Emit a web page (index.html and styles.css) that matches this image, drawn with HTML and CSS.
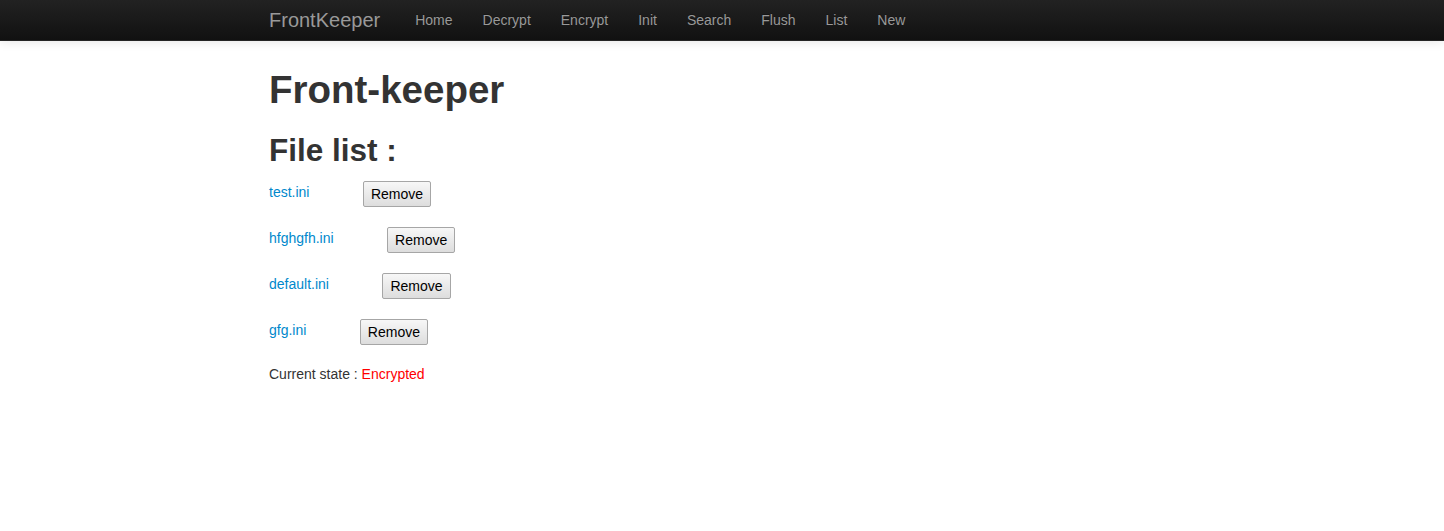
FILE: index.html
```html
<!DOCTYPE html>
<html>
<head>
<meta charset="utf-8">
<title>FrontKeeper</title>
<link rel="stylesheet" href="styles.css">
</head>
<body>
<header class="navbar">
  <div class="container nav-inner">
    <a class="brand" href="#">FrontKeeper</a>
    <ul class="nav">
      <li><a href="#">Home</a></li>
      <li><a href="#">Decrypt</a></li>
      <li><a href="#">Encrypt</a></li>
      <li><a href="#">Init</a></li>
      <li><a href="#">Search</a></li>
      <li><a href="#">Flush</a></li>
      <li><a href="#">List</a></li>
      <li><a href="#">New</a></li>
    </ul>
  </div>
</header>
<main class="container content">
  <h1>Front-keeper</h1>
  <h2>File list :</h2>
  <div class="file-row"><a href="#">test.ini</a><button class="btn-remove">Remove</button></div>
  <div class="file-row"><a href="#">hfghgfh.ini</a><button class="btn-remove">Remove</button></div>
  <div class="file-row"><a href="#">default.ini</a><button class="btn-remove">Remove</button></div>
  <div class="file-row"><a href="#">gfg.ini</a><button class="btn-remove">Remove</button></div>
  <p class="state">Current state : <span class="encrypted">Encrypted</span></p>
</main>
</body>
</html>
```

FILE: styles.css
```css
html, body {
  margin: 0;
  padding: 0;
  background: #ffffff;
}
body {
  font-family: "Liberation Sans", Arial, Helvetica, sans-serif;
  font-size: 14px;
  line-height: 20px;
  color: #333333;
}
.container {
  width: 906px;
  margin: 0 auto;
}
.navbar {
  height: 40px;
  background: linear-gradient(to bottom, #222222, #111111);
  border-bottom: 1px solid #252525;
  box-shadow: 0 1px 10px rgba(0, 0, 0, 0.1);
}
.nav-inner {
  display: flex;
  align-items: flex-start;
}
.brand {
  display: block;
  padding: 10px 20px 10px 0;
  font-size: 20px;
  line-height: 20px;
  color: #999999;
  text-decoration: none;
}
.nav {
  display: flex;
  list-style: none;
  margin: 0;
  padding: 0;
}
.nav a {
  display: block;
  padding: 10px 15px;
  line-height: 20px;
  font-size: 14px;
  color: #999999;
  text-decoration: none;
  text-shadow: 0 -1px 0 rgba(0, 0, 0, 0.25);
}
.content {
  padding-top: 19px;
}
h1 {
  margin: 10px 0;
  font-size: 38.5px;
  line-height: 40px;
  font-weight: bold;
  color: #333333;
}
h2 {
  margin: 20px 0 11px;
  font-size: 31.5px;
  line-height: 40px;
  font-weight: bold;
  color: #333333;
}
.file-row {
  display: flex;
  align-items: center;
  height: 26px;
  margin-bottom: 20px;
}
.file-row a {
  color: #0088cc;
  text-decoration: none;
  margin-bottom: 4px;
}
.btn-remove {
  margin: 0 0 0 53.5px;
  height: 26px;
  padding: 2px 7px;
  font-family: "Liberation Sans", Arial, Helvetica, sans-serif;
  font-size: 14px;
  line-height: 20px;
  color: #000000;
  background: linear-gradient(to bottom, #f7f7f7, #dddddd);
  border: 1px solid #a6a6a6;
  border-radius: 2px;
  box-sizing: border-box;
}
.state {
  margin: -1px 0 10px;
}
.encrypted {
  color: #ff0000;
}
```
